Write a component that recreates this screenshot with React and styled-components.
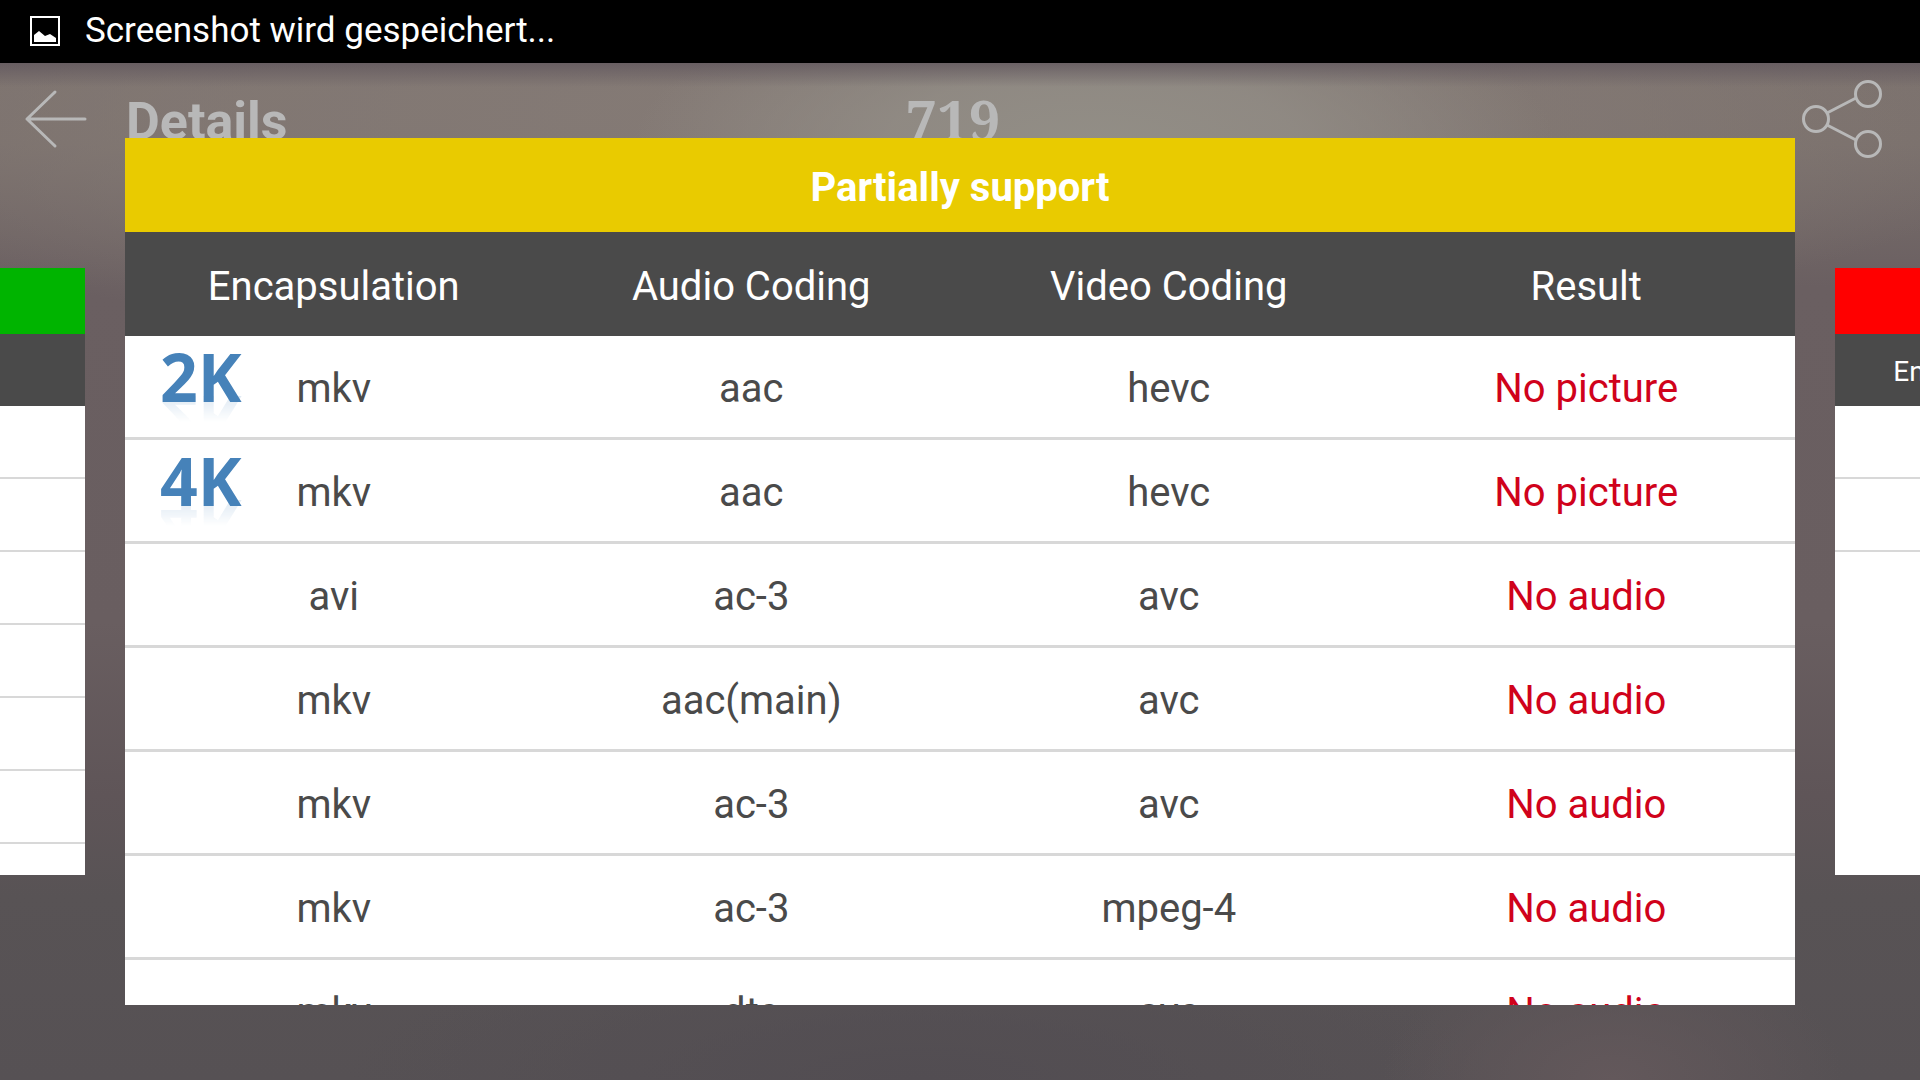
import React from 'react';
import styled, { createGlobalStyle, css } from 'styled-components';

const GlobalStyle = createGlobalStyle`
  * {
    box-sizing: border-box;
  }

  body {
    margin: 0;
    background: #575254;
    font-family: Roboto, sans-serif;
  }
`;

const COLUMNS = ['Encapsulation', 'Audio Coding', 'Video Coding', 'Result'];

const PARTIAL_ROWS = [
  { badge: '2K', cells: ['mkv', 'aac', 'hevc'], result: 'No picture' },
  { badge: '4K', cells: ['mkv', 'aac', 'hevc'], result: 'No picture' },
  { cells: ['avi', 'ac-3', 'avc'], result: 'No audio' },
  { cells: ['mkv', 'aac(main)', 'avc'], result: 'No audio' },
  { cells: ['mkv', 'ac-3', 'avc'], result: 'No audio' },
  { cells: ['mkv', 'ac-3', 'mpeg-4'], result: 'No audio' },
  { cells: ['mkv', 'dts', 'avc'], result: 'No audio' }
];

const emptyRows = count => Array.from({ length: count }, () => ({ cells: ['', '', ''], result: '' }));

const Screen = styled.div`
  display: flex;
  flex-direction: column;
  height: 100vh;
  overflow: hidden;
`;

const StatusBar = styled.div`
  display: flex;
  flex: none;
  align-items: center;
  gap: 25px;
  height: 63px;
  padding: 0 30px 2px;
  background: #000;
  color: #fff;
  font-size: 35px;
  line-height: 40px;
`;

const Page = styled.main`
  position: relative;
  flex: 1;
  min-height: 0;
  background:
    linear-gradient(180deg, rgba(98, 88, 94, 0.8) 0, rgba(98, 88, 94, 0) 24px),
    radial-gradient(ellipse 24% 16% at 57% 8%, #928e86 0%, rgba(146, 141, 134, 0.8) 45%, rgba(140, 132, 127, 0) 100%),
    radial-gradient(ellipse 62% 24% at 46% 5%, #857b76 0%, rgba(133, 123, 118, 0.6) 60%, rgba(133, 123, 118, 0) 100%),
    radial-gradient(ellipse 12% 14% at 84% 100%, #63585b 0%, rgba(99, 88, 91, 0) 100%),
    radial-gradient(ellipse 30% 14% at 48% 100%, #524d52 0%, rgba(82, 77, 82, 0) 100%),
    linear-gradient(180deg, #7b716d 0%, #7a706c 8%, #6a5f61 22%, #695e60 55%, #5f5558 72%, #585355 82%, #565154 100%);
`;

const Toolbar = styled.header`
  display: grid;
  grid-template-columns: 1fr auto 1fr;
  align-items: center;
  height: 112px;
  padding: 0 38px 0 24px;
  color: #b8b8b8;
`;

const ToolbarStart = styled.div`
  display: flex;
  align-items: center;
  gap: 38px;
`;

const IconButton = styled.button`
  display: flex;
  padding: 0;
  border: 0;
  background: none;
  color: inherit;
`;

const ShareButton = styled(IconButton)`
  justify-self: end;
`;

const Heading = styled.h1`
  margin: 0;
  padding-top: 6px;
  font-size: 52px;
  line-height: 60px;
`;

const Counter = styled.span`
  font: bold 56px/60px 'Noto Serif', 'Liberation Serif', serif;
`;

const Carousel = styled.div`
  position: absolute;
  inset: 0;
  display: flex;
  align-items: center;
  gap: 40px;
  padding: 75px 0;
`;

/* Shows only the edge of a neighbouring card */
const Peek = styled.div`
  display: flex;
  flex: 0 0 85px;
  justify-content: ${props => (props.$side === 'left' ? 'flex-end' : 'flex-start')};
  height: 70%;
  overflow: hidden;
`;

const Card = styled.section`
  display: flex;
  flex-direction: column;
  height: 100%;
  overflow: hidden;
  background: #fff;
  ${props =>
    props.$small
      ? css`
          flex: 0 0 61vw;
          font-size: 28px;
          --title: 66px;
          --head: 72px;
          --row: 73px;
          --line: 2px;
          --drop: 2px;
        `
      : css`
          flex: 1;
          font-size: 40px;
          --title: 94px;
          --head: 104px;
          --row: 104px;
          --line: 3px;
          --drop: 4px;
        `}
`;

const CardTitle = styled.h2`
  display: flex;
  flex: none;
  align-items: center;
  justify-content: center;
  height: var(--title);
  margin: 0;
  padding-top: var(--drop);
  background: ${props => props.$color};
  color: #fff;
  font-size: inherit;
`;

const Table = styled.table`
  width: 100%;
  border-collapse: separate;
  border-spacing: 0;
  table-layout: fixed;
`;

const HeadCell = styled.th`
  height: var(--head);
  padding: var(--drop) 0 0;
  background: #4a4a4a;
  color: #fff;
  font-weight: normal;
`;

const Cell = styled.td`
  position: relative;
  height: var(--row);
  padding: var(--drop) 0 0;
  border-bottom: var(--line) solid #d8d8d8;
  color: ${props => (props.$result ? '#d0021b' : '#4a4a4a')};
  text-align: center;
`;

const Badge = styled.span`
  position: absolute;
  top: 10px;
  left: 35px;
  color: #4682b9;
  font: bold 66px/60px 'Open Sans', sans-serif;
  -webkit-box-reflect: below -14px linear-gradient(transparent 50%, rgba(0, 0, 0, 0.2) 100%);
`;

const ImageIcon = () => (
  <svg width="30" height="30" viewBox="0 0 30 30" aria-hidden="true">
    <rect x="1" y="1" width="28" height="28" fill="none" stroke="#fff" strokeWidth="2" />
    <path d="M4 26v-7l5-4 6 5 5-2 6 4v4z" fill="#fff" />
  </svg>
);

const BackIcon = () => (
  <svg width="64" height="60" viewBox="0 0 64 60" fill="none" stroke="currentColor" strokeWidth="3" strokeLinecap="round" strokeLinejoin="round">
    <path d="M61 30H3M31 3L3 30l28 27" />
  </svg>
);

const ShareIcon = () => (
  <svg width="80" height="78" viewBox="0 0 80 78" fill="none" stroke="currentColor" strokeWidth="3">
    <circle cx="14" cy="39" r="12.5" />
    <circle cx="66" cy="14" r="12.5" />
    <circle cx="66" cy="64" r="12.5" />
    <path d="M25 33l29-15M25 45l29 15" />
  </svg>
);

const FormatCard = ({ title, color, rows, small }) => (
  <Card $small={small}>
    <CardTitle $color={color}>{title}</CardTitle>
    <Table>
      <thead>
        <tr>
          {COLUMNS.map(column => (
            <HeadCell key={column} scope="col">
              {column}
            </HeadCell>
          ))}
        </tr>
      </thead>
      <tbody>
        {rows.map((row, index) => (
          <tr key={index}>
            {row.cells.map((cell, column) => (
              <Cell key={COLUMNS[column]}>
                {column === 0 && row.badge && <Badge>{row.badge}</Badge>}
                {cell}
              </Cell>
            ))}
            <Cell $result>{row.result}</Cell>
          </tr>
        ))}
      </tbody>
    </Table>
  </Card>
);

const App = () => (
  <>
    <GlobalStyle />
    <Screen>
      <StatusBar>
        <ImageIcon />
        <span>Screenshot wird gespeichert...</span>
      </StatusBar>
      <Page>
        <Toolbar>
          <ToolbarStart>
            <IconButton type="button" aria-label="Back">
              <BackIcon />
            </IconButton>
            <Heading>Details</Heading>
          </ToolbarStart>
          <Counter>719</Counter>
          <ShareButton type="button" aria-label="Share">
            <ShareIcon />
          </ShareButton>
        </Toolbar>
        <Carousel>
          <Peek $side="left">
            <FormatCard color="#00b400" rows={emptyRows(6)} small />
          </Peek>
          <FormatCard title="Partially support" color="#e9cb00" rows={PARTIAL_ROWS} />
          <Peek $side="right">
            <FormatCard color="#ff0000" rows={emptyRows(2)} small />
          </Peek>
        </Carousel>
      </Page>
    </Screen>
  </>
);

export default App;
